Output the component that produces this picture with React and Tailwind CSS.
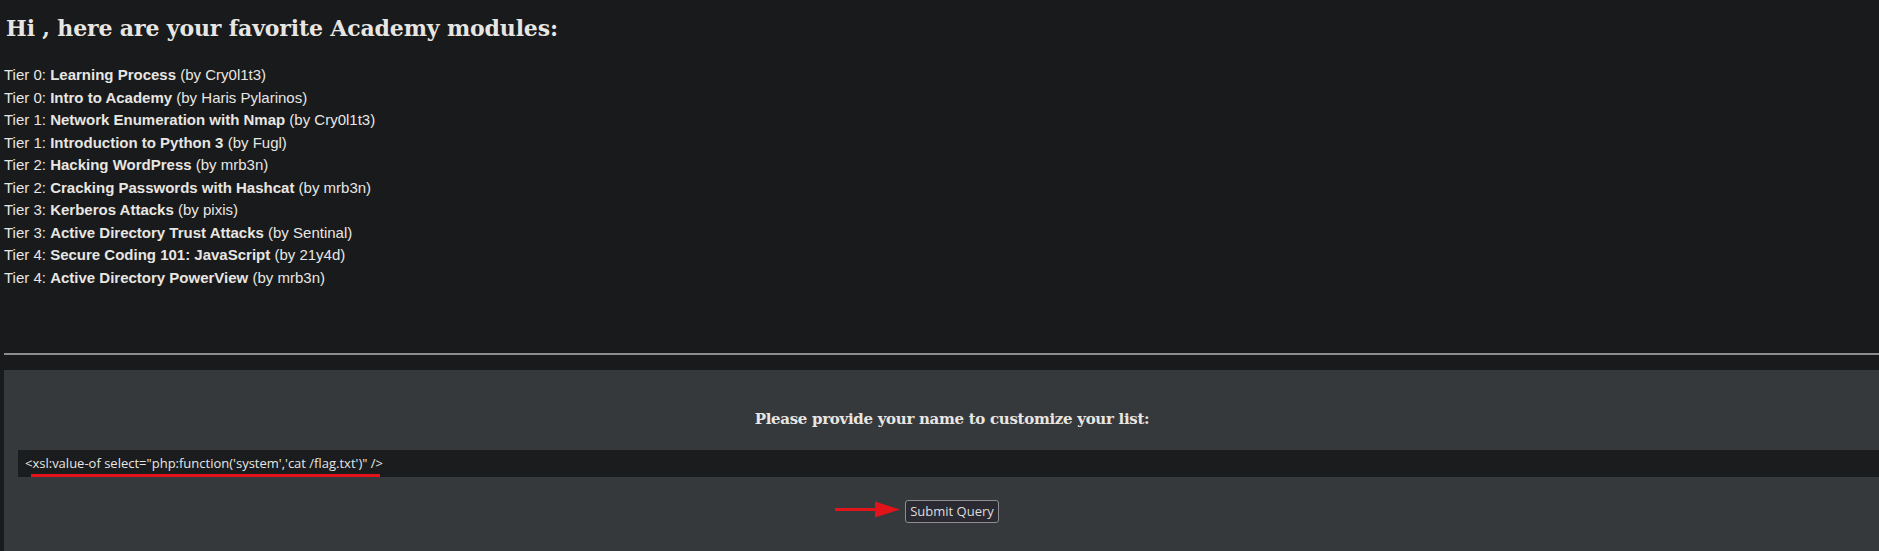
import React from 'react';

const modules = [
  ['0', 'Learning Process', 'Cry0l1t3'],
  ['0', 'Intro to Academy', 'Haris Pylarinos'],
  ['1', 'Network Enumeration with Nmap', 'Cry0l1t3'],
  ['1', 'Introduction to Python 3', 'Fugl'],
  ['2', 'Hacking WordPress', 'mrb3n'],
  ['2', 'Cracking Passwords with Hashcat', 'mrb3n'],
  ['3', 'Kerberos Attacks', 'pixis'],
  ['3', 'Active Directory Trust Attacks', 'Sentinal'],
  ['4', 'Secure Coding 101: JavaScript', '21y4d'],
  ['4', 'Active Directory PowerView', 'mrb3n'],
];

export default function App() {
  return (
    <div className="w-full min-h-[551px] bg-[#181a1b] text-[#e8e6e3] overflow-hidden pl-[4px]">
      <h2 className="pt-[12px] pl-[2px] text-[22px] leading-[32px] tracking-[-0.15px] font-bold font-['DejaVu_Serif',serif]">
        Hi , here are your favorite Academy modules:
      </h2>

      {/* module list */}
      <div className="mt-[20px] text-[15px] leading-[22.5px] font-['Liberation_Sans',Arial,sans-serif]">
        {modules.map(([tier, name, author], i) => (
          <p key={i}>
            Tier {tier}: <b>{name}</b> (by {author})
          </p>
        ))}
      </div>

      <hr className="mt-[64px] border-0 border-t-2 border-[#8c8c8c] w-[1900px]" />

      {/* name form */}
      <div className="mt-[15px] w-[1896px] h-[200px] bg-[#36393b] pt-[37px]">
        <h3 className="text-center text-[15px] leading-[24px] tracking-[-0.3px] font-bold font-['DejaVu_Serif',serif]">
          Please provide your name to customize your list:
        </h3>
        <div className="relative mx-[14px] mt-[19px] h-[27px] bg-[#1a1c1e] flex items-center pl-[7px] text-[13px] text-[#e8e6e3] font-['Open_Sans',sans-serif]">
          {`<xsl:value-of select="php:function('system','cat /flag.txt')" />`}
          <span className="absolute left-[13px] bottom-0 w-[349px] h-[3px] bg-[#e0141a]" />
        </div>
        <div className="flex justify-center mt-[21px]">
          <div className="relative">
            <svg className="absolute right-full mr-[5px] top-[3px]" width="65" height="17" viewBox="0 0 65 17">
              <line x1="0" y1="8.5" x2="46" y2="8.5" stroke="#e0141a" strokeWidth="3" />
              <polygon points="40,0.5 65,8.5 40,16.5" fill="#e0141a" />
            </svg>
            <button className="h-[23px] w-[94px] rounded-[3px] border border-[#8e8e8e] bg-[#2b2a33] text-[13px] text-[#dcdcdc] font-['Open_Sans',sans-serif]">
              Submit Query
            </button>
          </div>
        </div>
      </div>
    </div>
  );
}
